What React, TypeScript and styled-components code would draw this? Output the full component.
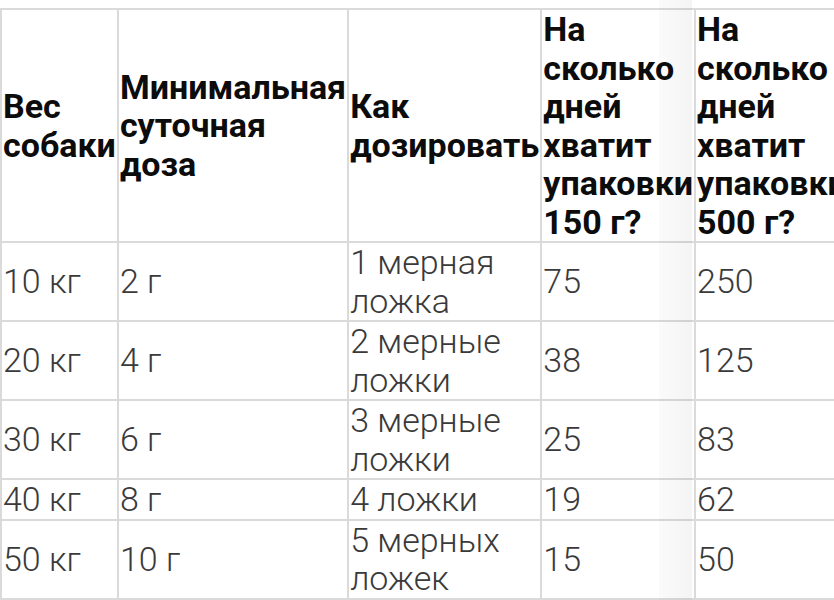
import React from 'react';
import styled, {createGlobalStyle} from "styled-components";

const GlobalStyle = createGlobalStyle`
  html, body {
    margin: 0;
    padding: 0;
    background: #fff;
    overflow: hidden;
  }
  body {
    font-family: Roboto, "Noto Sans", "Liberation Sans", sans-serif;
    color: #111;
  }
`

const Page = styled.div`
  position: relative;
  width: 834px;
  height: 600px;
  padding: 8px 0 0 0;
  box-sizing: border-box;
  overflow: hidden;
`

// faint vertical band that sits over the last columns
const Shade = styled.div`
  position: absolute;
  top: 0;
  bottom: 0;
  left: 659px;
  width: 33px;
  pointer-events: none;
  background: linear-gradient(to right, rgba(0, 0, 0, 0.02), rgba(0, 0, 0, 0.045));
`

const Table = styled.table`
  border-collapse: collapse;
  width: 100%;
  font-size: 34px;
  line-height: 38.5px;
`

const HeadCell = styled.th`
  border: 2px solid #dadada;
  padding: 0 1px;
  text-align: left;
  vertical-align: middle;
  font-weight: 700;
  color: #0c0c0c;
`

const Cell = styled.td`
  border: 2px solid #dadada;
  padding: 0 1px;
  vertical-align: middle;
  font-family: "Roboto Light", Roboto, "Noto Sans", sans-serif;
  font-weight: 300;
  color: #3a3a3a;
`

type Row = {
    weight: string
    dose: string
    how: string
    small: string
    big: string
}

const rows: Row[] = [
    {weight: "10 кг", dose: "2 г", how: "1 мерная ложка", small: "75", big: "250"},
    {weight: "20 кг", dose: "4 г", how: "2 мерные ложки", small: "38", big: "125"},
    {weight: "30 кг", dose: "6 г", how: "3 мерные ложки", small: "25", big: "83"},
    {weight: "40 кг", dose: "8 г", how: "4 ложки", small: "19", big: "62"},
    {weight: "50 кг", dose: "10 г", how: "5 мерных ложек", small: "15", big: "50"},
]

const App = () => {
    return (
        <>
            <GlobalStyle/>
            <Page>
                <Table>
                    <thead>
                    <tr>
                        <HeadCell>Вес собаки</HeadCell>
                        <HeadCell>Минимальная суточная доза</HeadCell>
                        <HeadCell>Как дозировать</HeadCell>
                        <HeadCell>На сколько дней хватит упаковки 150 г?</HeadCell>
                        <HeadCell>На сколько дней хватит упаковки 500 г?</HeadCell>
                    </tr>
                    </thead>
                    <tbody>
                    {rows.map(row =>
                        <tr key={row.weight}>
                            <Cell>{row.weight}</Cell>
                            <Cell>{row.dose}</Cell>
                            <Cell>{row.how}</Cell>
                            <Cell>{row.small}</Cell>
                            <Cell>{row.big}</Cell>
                        </tr>
                    )}
                    </tbody>
                </Table>
                <Shade/>
            </Page>
        </>
    );
};

export default App;
